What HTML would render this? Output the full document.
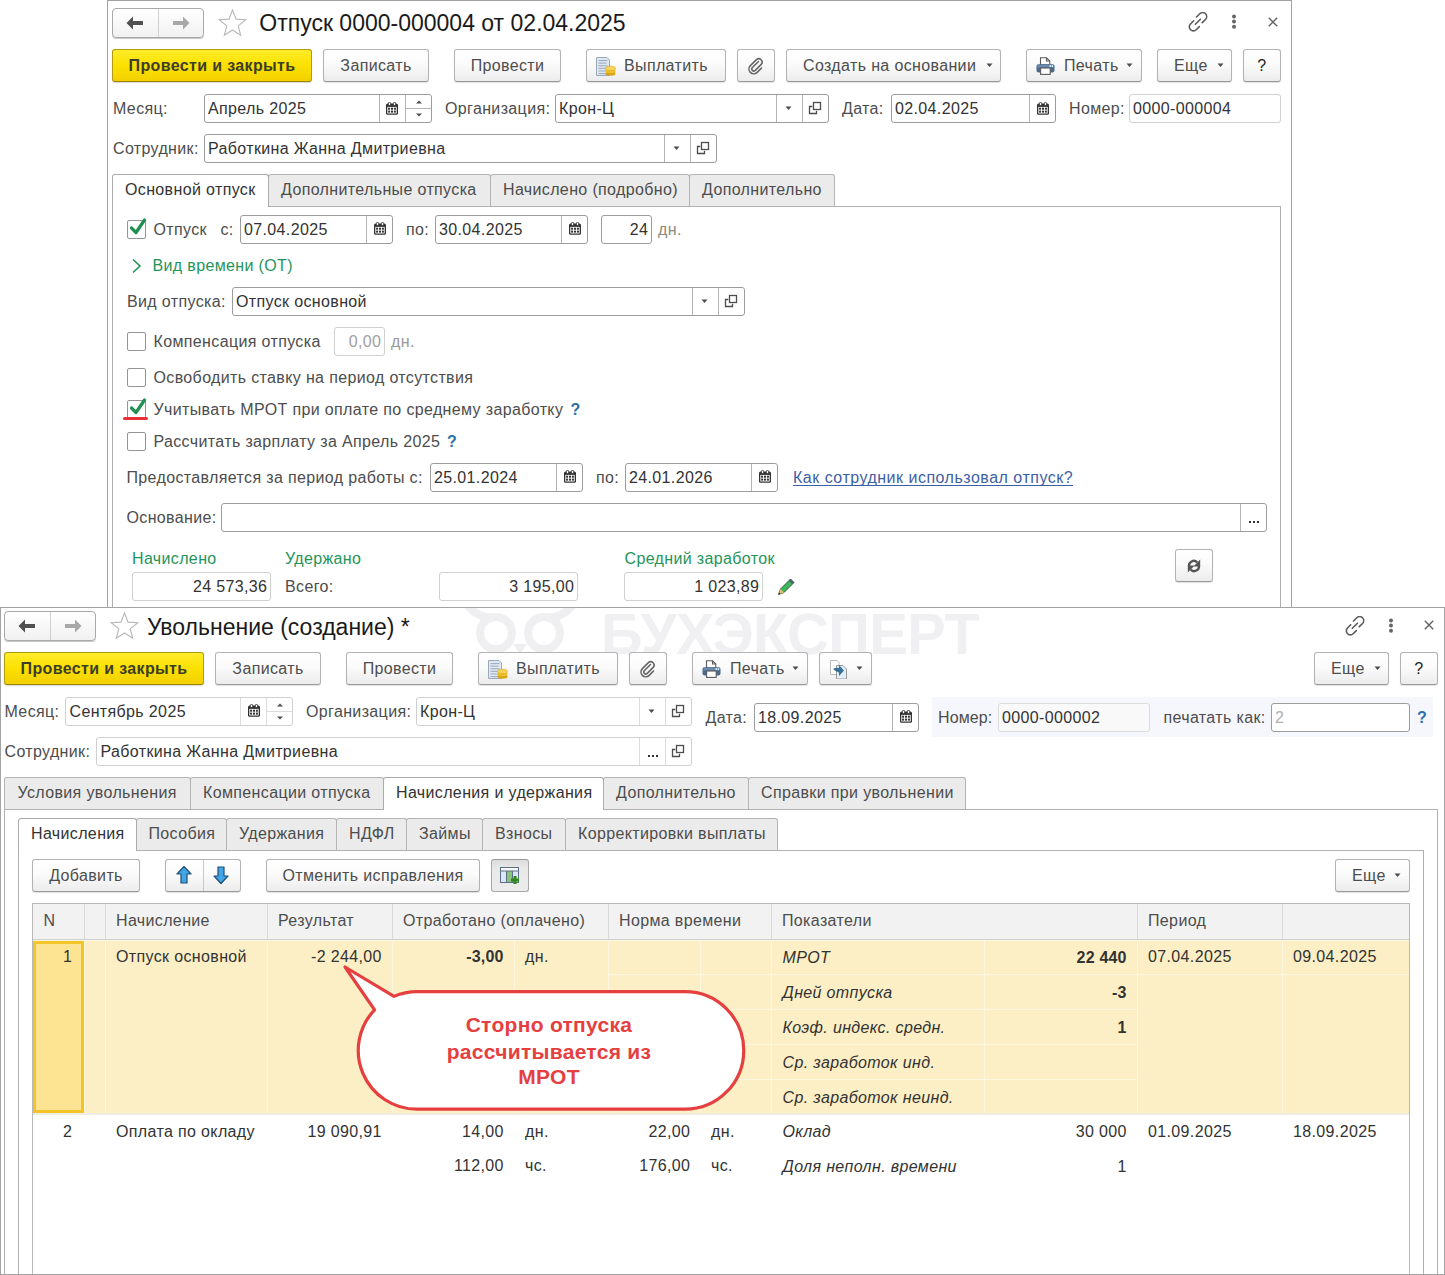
<!DOCTYPE html>
<html><head><meta charset="utf-8"><style>
html,body{margin:0;padding:0;}
body{width:1445px;height:1275px;overflow:hidden;position:relative;background:#fff;font-family:"Liberation Sans", sans-serif;}
.t{position:absolute;white-space:nowrap;font-family:"Liberation Sans", sans-serif;}
.r{position:absolute;}
</style></head><body>
<div class="r" style="left:107px;top:0;width:1185px;height:608px;border:1px solid #a3a3a3;box-sizing:border-box;background:#fff"></div>
<div class="r" style="left:112px;top:8px;width:92px;height:30px;border:1px solid #a9a9a9;border-radius:4px;background:linear-gradient(#fff,#f1f1f1);box-sizing:border-box;box-shadow:0 1px 0 #c8c8c8;"></div>
<div class="r" style="left:158px;top:9px;width:1px;height:28px;background:#d0d0d0;"></div>
<svg class="r" style="left:126px;top:16px" width="18" height="14" viewBox="0 0 18 14"><path d="M0.5 7 L7 0.5 V5 H17 V9 H7 V13.5 Z" fill="#505050"/></svg>
<svg class="r" style="left:172px;top:16px" width="18" height="14" viewBox="0 0 18 14"><path d="M17.5 7 L11 0.5 V5 H1 V9 H11 V13.5 Z" fill="#a8a8a8"/></svg>
<svg class="r" style="left:218px;top:9px" width="29" height="28" viewBox="0 0 29 28"><polygon points="14.50,1.00 18.03,10.15 27.81,10.67 20.21,16.85 22.73,26.33 14.50,21.00 6.27,26.33 8.79,16.85 1.19,10.67 10.97,10.15" fill="#fff" stroke="#b8b8b8" stroke-width="1.1"/></svg>
<div class="t" style="top:8.50px;font-size:23px;line-height:29px;color:#1a1a1a;letter-spacing:0px;left:259.30px;">Отпуск 0000-000004 от 02.04.2025</div>
<svg class="r" style="left:1188px;top:12px" width="20" height="20" viewBox="0 0 20 20"><g fill="none" stroke="#5a5a5a" stroke-width="1.6" stroke-linecap="round"><path d="M8.5 5 L11.8 1.8 a4 4 0 0 1 5.7 5.7 L14.3 10.6"/><path d="M11.3 14.6 L8.2 17.7 a4 4 0 0 1 -5.7 -5.7 L5.7 8.8"/><path d="M7.3 12.3 L12.4 7.2"/></g></svg>
<svg class="r" style="left:1231px;top:14px" width="6" height="16" viewBox="0 0 6 16"><circle cx="3" cy="2.5" r="2" fill="#666"/><circle cx="3" cy="7.6" r="2" fill="#666"/><circle cx="3" cy="12.7" r="2" fill="#666"/></svg>
<svg class="r" style="left:1267.5px;top:17px" width="10" height="10" viewBox="0 0 10 10"><path d="M0.8 0.8 L9.2 9.2 M9.2 0.8 L0.8 9.2" stroke="#666" stroke-width="1.5"/></svg>
<div class="r" style="left:112px;top:49px;width:200px;height:33px;border:1px solid #b39b10;border-bottom-color:#9c8400;border-radius:3px;background:linear-gradient(#ffec2a 0%,#fbe000 50%,#f3d000 100%);box-sizing:border-box;box-shadow:0 1px 1px rgba(0,0,0,.15);"></div>
<div class="t" style="top:56.00px;font-size:16px;line-height:20px;color:#3d3d2a;letter-spacing:0.36px;font-weight:700;left:-88.00px;width:600px;text-align:center;">Провести и закрыть</div>
<div class="r" style="left:323px;top:49px;width:106px;height:33px;border:1px solid #b3b3b3;border-bottom-color:#999;border-radius:3px;background:linear-gradient(#ffffff 0%,#fbfbfb 45%,#ececec 100%);box-sizing:border-box;box-shadow:0 1px 1px rgba(0,0,0,.12);"></div>
<div class="t" style="top:56.00px;font-size:16px;line-height:20px;color:#4d4d4d;letter-spacing:0.36px;left:76.00px;width:600px;text-align:center;">Записать</div>
<div class="r" style="left:454px;top:49px;width:107px;height:33px;border:1px solid #b3b3b3;border-bottom-color:#999;border-radius:3px;background:linear-gradient(#ffffff 0%,#fbfbfb 45%,#ececec 100%);box-sizing:border-box;box-shadow:0 1px 1px rgba(0,0,0,.12);"></div>
<div class="t" style="top:56.00px;font-size:16px;line-height:20px;color:#4d4d4d;letter-spacing:0.36px;left:207.50px;width:600px;text-align:center;">Провести</div>
<div class="r" style="left:586px;top:49px;width:140px;height:33px;border:1px solid #b3b3b3;border-bottom-color:#999;border-radius:3px;background:linear-gradient(#ffffff 0%,#fbfbfb 45%,#ececec 100%);box-sizing:border-box;box-shadow:0 1px 1px rgba(0,0,0,.12);"></div>
<div class="t" style="top:56.00px;font-size:16px;line-height:20px;color:#4d4d4d;letter-spacing:0.36px;left:624.00px;">Выплатить</div>
<svg class="r" style="left:596px;top:57px" width="20" height="20" viewBox="0 0 20 20"><path d="M0.5 0.5 H11 L13.5 3 V18.5 H0.5 Z" fill="#dfe7f0" stroke="#9aa8b8" stroke-width="1"/><rect x="2.5" y="3.0" width="9" height="1.1" fill="#9fb0c4"/><rect x="2.5" y="5.6" width="8" height="1.1" fill="#9fb0c4"/><rect x="2.5" y="8.2" width="9" height="1.1" fill="#9fb0c4"/><rect x="2.5" y="10.8" width="8" height="1.1" fill="#9fb0c4"/><rect x="2.5" y="13.4" width="9" height="1.1" fill="#9fb0c4"/><rect x="2.5" y="16.0" width="8" height="1.1" fill="#9fb0c4"/><ellipse cx="14.5" cy="16.5" rx="5" ry="2.2" fill="#d9a416"/><ellipse cx="14.5" cy="14" rx="5" ry="2.2" fill="#f0c030"/><ellipse cx="14.5" cy="11.5" rx="5" ry="2.2" fill="#f7d45a" stroke="#d9a416" stroke-width="0.6"/></svg>
<div class="r" style="left:737px;top:49px;width:38px;height:33px;border:1px solid #b3b3b3;border-bottom-color:#999;border-radius:3px;background:linear-gradient(#ffffff 0%,#fbfbfb 45%,#ececec 100%);box-sizing:border-box;box-shadow:0 1px 1px rgba(0,0,0,.12);"></div>
<svg class="r" style="left:747px;top:56.5px" width="18" height="18" viewBox="0 0 18 18"><path d="M11.5 4.5 L5.2 10.8 a2 2 0 0 0 2.8 2.8 L14.2 7.4 a3.4 3.4 0 0 0 -4.8 -4.8 L3.4 8.6 a4.8 4.8 0 0 0 6.8 6.8 L14.5 11" fill="none" stroke="#666" stroke-width="1.6" stroke-linecap="round"/></svg>
<div class="r" style="left:786px;top:49px;width:215px;height:33px;border:1px solid #b3b3b3;border-bottom-color:#999;border-radius:3px;background:linear-gradient(#ffffff 0%,#fbfbfb 45%,#ececec 100%);box-sizing:border-box;box-shadow:0 1px 1px rgba(0,0,0,.12);"></div>
<div class="t" style="top:56.00px;font-size:16px;line-height:20px;color:#4d4d4d;letter-spacing:0.36px;left:803.00px;">Создать на основании</div>
<svg class="r" style="left:985.5px;top:63px" width="8" height="5" viewBox="0 0 8 5"><path d="M0.5 0.5 H6.5 L3.5 4 Z" fill="#4d4d4d"/></svg>
<div class="r" style="left:1026px;top:49px;width:116px;height:33px;border:1px solid #b3b3b3;border-bottom-color:#999;border-radius:3px;background:linear-gradient(#ffffff 0%,#fbfbfb 45%,#ececec 100%);box-sizing:border-box;box-shadow:0 1px 1px rgba(0,0,0,.12);"></div>
<div class="t" style="top:56.00px;font-size:16px;line-height:20px;color:#4d4d4d;letter-spacing:0.36px;left:1064.00px;">Печать</div>
<svg class="r" style="left:1125.5px;top:63px" width="8" height="5" viewBox="0 0 8 5"><path d="M0.5 0.5 H6.5 L3.5 4 Z" fill="#4d4d4d"/></svg>
<svg class="r" style="left:1036px;top:57px" width="19" height="18" viewBox="0 0 19 18"><path d="M4.5 0.8 H10.5 L13.8 4 V8 H4.5 Z" fill="#fff" stroke="#5a5a5a" stroke-width="1.1"/><path d="M10.5 0.8 V4 H13.8" fill="none" stroke="#5a5a5a" stroke-width="1.1"/><rect x="0.5" y="7.2" width="18" height="8.2" rx="1.8" fill="#4a6a90"/><rect x="1.5" y="8" width="16" height="2.5" fill="#6a8ab0"/><rect x="13.5" y="8.3" width="1.5" height="1.5" fill="#dff"/><rect x="15.6" y="8.3" width="1.5" height="1.5" fill="#dff"/><rect x="4.6" y="11" width="9.6" height="6.4" fill="#fff" stroke="#5a5a5a" stroke-width="1.1"/></svg>
<div class="r" style="left:1157px;top:49px;width:75px;height:33px;border:1px solid #b3b3b3;border-bottom-color:#999;border-radius:3px;background:linear-gradient(#ffffff 0%,#fbfbfb 45%,#ececec 100%);box-sizing:border-box;box-shadow:0 1px 1px rgba(0,0,0,.12);"></div>
<div class="t" style="top:56.00px;font-size:16px;line-height:20px;color:#4d4d4d;letter-spacing:0.36px;left:1174.00px;">Еще</div>
<svg class="r" style="left:1216.5px;top:63px" width="8" height="5" viewBox="0 0 8 5"><path d="M0.5 0.5 H6.5 L3.5 4 Z" fill="#4d4d4d"/></svg>
<div class="r" style="left:1243px;top:49px;width:38px;height:33px;border:1px solid #b3b3b3;border-bottom-color:#999;border-radius:3px;background:linear-gradient(#ffffff 0%,#fbfbfb 45%,#ececec 100%);box-sizing:border-box;box-shadow:0 1px 1px rgba(0,0,0,.12);"></div>
<div class="t" style="top:56.00px;font-size:16px;line-height:20px;color:#222;letter-spacing:0.36px;left:962.00px;width:600px;text-align:center;">?</div>
<div class="t" style="top:99.00px;font-size:16px;line-height:20px;color:#4d4d4d;letter-spacing:0.36px;left:113.00px;">Месяц:</div>
<div class="r" style="left:204px;top:94px;width:228px;height:29px;border:1px solid #9c9c9c;border-radius:3px;background:#fff;box-sizing:border-box;"></div>
<div class="t" style="top:98.50px;font-size:16px;line-height:20px;color:#333;letter-spacing:0.36px;left:208.00px;">Апрель 2025</div>
<div class="r" style="left:379px;top:95px;width:1px;height:27px;background:#b4b4b4;"></div>
<svg class="r" style="left:386px;top:102px" width="12" height="13" viewBox="0 0 12 13"><rect x="0" y="1.6" width="12" height="11.2" rx="1.6" fill="#333"/><rect x="1.3" y="4.9" width="9.4" height="6.6" fill="#fff"/><rect x="2.4" y="0.3" width="2.2" height="3.3" rx="1.1" fill="#fff" stroke="#333" stroke-width="0.9"/><rect x="7.4" y="0.3" width="2.2" height="3.3" rx="1.1" fill="#fff" stroke="#333" stroke-width="0.9"/><rect x="2.1" y="5.7" width="2" height="2" fill="#333"/><rect x="2.1" y="8.6" width="2" height="2" fill="#333"/><rect x="5.0" y="5.7" width="2" height="2" fill="#333"/><rect x="5.0" y="8.6" width="2" height="2" fill="#333"/><rect x="7.9" y="5.7" width="2" height="2" fill="#333"/><rect x="7.9" y="8.6" width="2" height="2" fill="#333"/></svg>
<div class="r" style="left:405px;top:95px;width:1px;height:27px;background:#b4b4b4;"></div>
<div class="r" style="left:406px;top:108px;width:25px;height:1px;background:#b4b4b4;"></div>
<svg class="r" style="left:416.0px;top:100px" width="6" height="4" viewBox="0 0 6 4"><path d="M0 3.5 H6 L3 0.5Z" fill="#4d4d4d"/></svg>
<svg class="r" style="left:416.0px;top:113px" width="6" height="4" viewBox="0 0 6 4"><path d="M0 0.5 H6 L3 3.5Z" fill="#4d4d4d"/></svg>
<div class="t" style="top:99.00px;font-size:16px;line-height:20px;color:#4d4d4d;letter-spacing:0.36px;left:445.00px;">Организация:</div>
<div class="r" style="left:555px;top:94px;width:274px;height:29px;border:1px solid #9c9c9c;border-radius:3px;background:#fff;box-sizing:border-box;"></div>
<div class="t" style="top:98.50px;font-size:16px;line-height:20px;color:#333;letter-spacing:0.36px;left:559.00px;">Крон-Ц</div>
<div class="r" style="left:776px;top:95px;width:1px;height:27px;background:#b4b4b4;"></div>
<svg class="r" style="left:785.0px;top:105.5px" width="8" height="5" viewBox="0 0 8 5"><path d="M0.5 0.5 H6.5 L3.5 4 Z" fill="#4d4d4d"/></svg>
<div class="r" style="left:802px;top:95px;width:1px;height:27px;background:#b4b4b4;"></div>
<svg class="r" style="left:808.0px;top:100.5px" width="14" height="14" viewBox="0 0 14 14"><path d="M4.3 5.5 H1.5 V12.5 H8.5 V9.8" fill="none" stroke="#4d4d4d" stroke-width="1.3"/><rect x="5.5" y="1.5" width="7" height="7" fill="none" stroke="#4d4d4d" stroke-width="1.3"/></svg>
<div class="t" style="top:99.00px;font-size:16px;line-height:20px;color:#4d4d4d;letter-spacing:0.36px;left:842.00px;">Дата:</div>
<div class="r" style="left:891px;top:94px;width:165px;height:29px;border:1px solid #9c9c9c;border-radius:3px;background:#fff;box-sizing:border-box;"></div>
<div class="t" style="top:98.50px;font-size:16px;line-height:20px;color:#333;letter-spacing:0.36px;left:895.00px;">02.04.2025</div>
<div class="r" style="left:1029px;top:95px;width:1px;height:27px;background:#b4b4b4;"></div>
<svg class="r" style="left:1037px;top:102px" width="12" height="13" viewBox="0 0 12 13"><rect x="0" y="1.6" width="12" height="11.2" rx="1.6" fill="#333"/><rect x="1.3" y="4.9" width="9.4" height="6.6" fill="#fff"/><rect x="2.4" y="0.3" width="2.2" height="3.3" rx="1.1" fill="#fff" stroke="#333" stroke-width="0.9"/><rect x="7.4" y="0.3" width="2.2" height="3.3" rx="1.1" fill="#fff" stroke="#333" stroke-width="0.9"/><rect x="2.1" y="5.7" width="2" height="2" fill="#333"/><rect x="2.1" y="8.6" width="2" height="2" fill="#333"/><rect x="5.0" y="5.7" width="2" height="2" fill="#333"/><rect x="5.0" y="8.6" width="2" height="2" fill="#333"/><rect x="7.9" y="5.7" width="2" height="2" fill="#333"/><rect x="7.9" y="8.6" width="2" height="2" fill="#333"/></svg>
<div class="t" style="top:99.00px;font-size:16px;line-height:20px;color:#4d4d4d;letter-spacing:0.36px;left:1069.00px;">Номер:</div>
<div class="r" style="left:1129px;top:94px;width:152px;height:29px;border:1px solid #d0d0d0;border-radius:3px;background:#fff;box-sizing:border-box;"></div>
<div class="t" style="top:98.50px;font-size:16px;line-height:20px;color:#333;letter-spacing:0.36px;left:1133.00px;">0000-000004</div>
<div class="t" style="top:139.00px;font-size:16px;line-height:20px;color:#4d4d4d;letter-spacing:0.36px;left:113.00px;">Сотрудник:</div>
<div class="r" style="left:204px;top:134px;width:513px;height:29px;border:1px solid #9c9c9c;border-radius:3px;background:#fff;box-sizing:border-box;"></div>
<div class="t" style="top:138.50px;font-size:16px;line-height:20px;color:#333;letter-spacing:0.36px;left:208.00px;">Работкина Жанна Дмитриевна</div>
<div class="r" style="left:664px;top:135px;width:1px;height:27px;background:#b4b4b4;"></div>
<svg class="r" style="left:673.0px;top:145.5px" width="8" height="5" viewBox="0 0 8 5"><path d="M0.5 0.5 H6.5 L3.5 4 Z" fill="#4d4d4d"/></svg>
<div class="r" style="left:690px;top:135px;width:1px;height:27px;background:#b4b4b4;"></div>
<svg class="r" style="left:696.0px;top:140.5px" width="14" height="14" viewBox="0 0 14 14"><path d="M4.3 5.5 H1.5 V12.5 H8.5 V9.8" fill="none" stroke="#4d4d4d" stroke-width="1.3"/><rect x="5.5" y="1.5" width="7" height="7" fill="none" stroke="#4d4d4d" stroke-width="1.3"/></svg>
<div class="r" style="left:112px;top:206px;width:1169px;height:494px;border:1px solid #b0b0b0;box-sizing:border-box;background:#fff;"></div>
<div class="r" style="left:268px;top:174px;width:223px;height:32px;border:1px solid #b4b4b4;border-bottom:none;border-radius:3px 3px 0 0;background:#ebebeb;box-sizing:border-box;"></div>
<div class="t" style="top:179.50px;font-size:16px;line-height:20px;color:#4d4d4d;letter-spacing:0.36px;left:281.00px;z-index:3;">Дополнительные отпуска</div>
<div class="r" style="left:490px;top:174px;width:200px;height:32px;border:1px solid #b4b4b4;border-bottom:none;border-radius:3px 3px 0 0;background:#ebebeb;box-sizing:border-box;"></div>
<div class="t" style="top:179.50px;font-size:16px;line-height:20px;color:#4d4d4d;letter-spacing:0.36px;left:503.00px;z-index:3;">Начислено (подробно)</div>
<div class="r" style="left:689px;top:174px;width:146px;height:32px;border:1px solid #b4b4b4;border-bottom:none;border-radius:3px 3px 0 0;background:#ebebeb;box-sizing:border-box;"></div>
<div class="t" style="top:179.50px;font-size:16px;line-height:20px;color:#4d4d4d;letter-spacing:0.36px;left:702.00px;z-index:3;">Дополнительно</div>
<div class="r" style="left:112px;top:174px;width:157px;height:33px;border:1px solid #ababab;border-bottom:none;border-radius:3px 3px 0 0;background:#fff;box-sizing:border-box;z-index:2;"></div>
<div class="t" style="top:179.50px;font-size:16px;line-height:20px;color:#333;letter-spacing:0.36px;left:125.00px;z-index:3;">Основной отпуск</div>
<div class="r" style="left:127px;top:220px;width:19px;height:19px;border:1px solid #959595;border-radius:2px;background:#fff;box-sizing:border-box;"></div>
<svg class="r" style="left:129px;top:217px" width="18" height="19" viewBox="0 0 18 19"><path d="M2.5 11 L7 15.5 L15.5 3" fill="none" stroke="#1e9150" stroke-width="3.2" stroke-linecap="round" stroke-linejoin="round"/></svg>
<div class="t" style="top:220.00px;font-size:16px;line-height:20px;color:#4d4d4d;letter-spacing:0.36px;left:153.50px;">Отпуск</div>
<div class="t" style="top:220.00px;font-size:16px;line-height:20px;color:#4d4d4d;letter-spacing:0.36px;left:220.50px;">с:</div>
<div class="r" style="left:240px;top:215px;width:153px;height:29px;border:1px solid #9c9c9c;border-radius:3px;background:#fff;box-sizing:border-box;"></div>
<div class="t" style="top:219.50px;font-size:16px;line-height:20px;color:#333;letter-spacing:0.36px;left:244.00px;">07.04.2025</div>
<div class="r" style="left:366px;top:216px;width:1px;height:27px;background:#b4b4b4;"></div>
<svg class="r" style="left:374px;top:222px" width="12" height="13" viewBox="0 0 12 13"><rect x="0" y="1.6" width="12" height="11.2" rx="1.6" fill="#333"/><rect x="1.3" y="4.9" width="9.4" height="6.6" fill="#fff"/><rect x="2.4" y="0.3" width="2.2" height="3.3" rx="1.1" fill="#fff" stroke="#333" stroke-width="0.9"/><rect x="7.4" y="0.3" width="2.2" height="3.3" rx="1.1" fill="#fff" stroke="#333" stroke-width="0.9"/><rect x="2.1" y="5.7" width="2" height="2" fill="#333"/><rect x="2.1" y="8.6" width="2" height="2" fill="#333"/><rect x="5.0" y="5.7" width="2" height="2" fill="#333"/><rect x="5.0" y="8.6" width="2" height="2" fill="#333"/><rect x="7.9" y="5.7" width="2" height="2" fill="#333"/><rect x="7.9" y="8.6" width="2" height="2" fill="#333"/></svg>
<div class="t" style="top:220.00px;font-size:16px;line-height:20px;color:#4d4d4d;letter-spacing:0.36px;left:406.00px;">по:</div>
<div class="r" style="left:435px;top:215px;width:153px;height:29px;border:1px solid #9c9c9c;border-radius:3px;background:#fff;box-sizing:border-box;"></div>
<div class="t" style="top:219.50px;font-size:16px;line-height:20px;color:#333;letter-spacing:0.36px;left:439.00px;">30.04.2025</div>
<div class="r" style="left:561px;top:216px;width:1px;height:27px;background:#b4b4b4;"></div>
<svg class="r" style="left:569px;top:222px" width="12" height="13" viewBox="0 0 12 13"><rect x="0" y="1.6" width="12" height="11.2" rx="1.6" fill="#333"/><rect x="1.3" y="4.9" width="9.4" height="6.6" fill="#fff"/><rect x="2.4" y="0.3" width="2.2" height="3.3" rx="1.1" fill="#fff" stroke="#333" stroke-width="0.9"/><rect x="7.4" y="0.3" width="2.2" height="3.3" rx="1.1" fill="#fff" stroke="#333" stroke-width="0.9"/><rect x="2.1" y="5.7" width="2" height="2" fill="#333"/><rect x="2.1" y="8.6" width="2" height="2" fill="#333"/><rect x="5.0" y="5.7" width="2" height="2" fill="#333"/><rect x="5.0" y="8.6" width="2" height="2" fill="#333"/><rect x="7.9" y="5.7" width="2" height="2" fill="#333"/><rect x="7.9" y="8.6" width="2" height="2" fill="#333"/></svg>
<div class="r" style="left:601px;top:215px;width:51px;height:29px;border:1px solid #9c9c9c;border-radius:3px;background:#fff;box-sizing:border-box;"></div>
<div class="t" style="top:219.50px;font-size:16px;line-height:20px;color:#333;letter-spacing:0.36px;right:796.64px;">24</div>
<div class="t" style="top:220.00px;font-size:16px;line-height:20px;color:#8c8c78;letter-spacing:0.36px;left:658.00px;">дн.</div>
<svg class="r" style="left:131px;top:258px" width="12" height="16" viewBox="0 0 12 16"><path d="M2 1.5 L9 8 L2 14.5" fill="none" stroke="#1f955a" stroke-width="1.6"/></svg>
<div class="t" style="top:256.00px;font-size:16px;line-height:20px;color:#1f955a;letter-spacing:0.36px;left:152.50px;">Вид времени (ОТ)</div>
<div class="t" style="top:292.00px;font-size:16px;line-height:20px;color:#4d4d4d;letter-spacing:0.36px;left:127.00px;">Вид отпуска:</div>
<div class="r" style="left:232px;top:287px;width:513px;height:29px;border:1px solid #9c9c9c;border-radius:3px;background:#fff;box-sizing:border-box;"></div>
<div class="t" style="top:291.50px;font-size:16px;line-height:20px;color:#333;letter-spacing:0.36px;left:236.00px;">Отпуск основной</div>
<div class="r" style="left:692px;top:288px;width:1px;height:27px;background:#b4b4b4;"></div>
<svg class="r" style="left:701.0px;top:298.5px" width="8" height="5" viewBox="0 0 8 5"><path d="M0.5 0.5 H6.5 L3.5 4 Z" fill="#4d4d4d"/></svg>
<div class="r" style="left:718px;top:288px;width:1px;height:27px;background:#b4b4b4;"></div>
<svg class="r" style="left:724.0px;top:293.5px" width="14" height="14" viewBox="0 0 14 14"><path d="M4.3 5.5 H1.5 V12.5 H8.5 V9.8" fill="none" stroke="#4d4d4d" stroke-width="1.3"/><rect x="5.5" y="1.5" width="7" height="7" fill="none" stroke="#4d4d4d" stroke-width="1.3"/></svg>
<div class="r" style="left:127px;top:332px;width:19px;height:19px;border:1px solid #959595;border-radius:2px;background:#fff;box-sizing:border-box;"></div>
<div class="t" style="top:332.00px;font-size:16px;line-height:20px;color:#4d4d4d;letter-spacing:0.36px;left:153.50px;">Компенсация отпуска</div>
<div class="r" style="left:334px;top:327px;width:51px;height:29px;border:1px solid #d0d0d0;border-radius:3px;background:#fff;box-sizing:border-box;"></div>
<div class="t" style="top:331.50px;font-size:16px;line-height:20px;color:#a0a0a0;letter-spacing:0.36px;right:1063.64px;">0,00</div>
<div class="t" style="top:332.00px;font-size:16px;line-height:20px;color:#999;letter-spacing:0.36px;left:391.00px;">дн.</div>
<div class="r" style="left:127px;top:368px;width:19px;height:19px;border:1px solid #959595;border-radius:2px;background:#fff;box-sizing:border-box;"></div>
<div class="t" style="top:368.00px;font-size:16px;line-height:20px;color:#4d4d4d;letter-spacing:0.36px;left:153.50px;">Освободить ставку на период отсутствия</div>
<div class="r" style="left:127px;top:400px;width:19px;height:19px;border:1px solid #959595;border-radius:2px;background:#fff;box-sizing:border-box;"></div>
<svg class="r" style="left:129px;top:397px" width="18" height="19" viewBox="0 0 18 19"><path d="M2.5 11 L7 15.5 L15.5 3" fill="none" stroke="#1e9150" stroke-width="3.2" stroke-linecap="round" stroke-linejoin="round"/></svg>
<div class="r" style="left:123px;top:416.5px;width:25px;height:3.0px;background:#e8303a;border-radius:1.5px;"></div>
<div class="t" style="top:400.00px;font-size:16px;line-height:20px;color:#4d4d4d;letter-spacing:0.36px;left:153.50px;">Учитывать МРОТ при оплате по среднему заработку</div>
<div class="t" style="top:400.00px;font-size:16px;line-height:20px;color:#2b70aa;letter-spacing:0px;font-weight:700;left:570.50px;">?</div>
<div class="r" style="left:127px;top:432px;width:19px;height:19px;border:1px solid #959595;border-radius:2px;background:#fff;box-sizing:border-box;"></div>
<div class="t" style="top:432.00px;font-size:16px;line-height:20px;color:#4d4d4d;letter-spacing:0.36px;left:153.50px;">Рассчитать зарплату за Апрель 2025</div>
<div class="t" style="top:432.00px;font-size:16px;line-height:20px;color:#2b70aa;letter-spacing:0px;font-weight:700;left:447.00px;">?</div>
<div class="t" style="top:468.00px;font-size:16px;line-height:20px;color:#4d4d4d;letter-spacing:0.36px;left:126.50px;">Предоставляется за период работы с:</div>
<div class="r" style="left:430px;top:463px;width:153px;height:29px;border:1px solid #9c9c9c;border-radius:3px;background:#fff;box-sizing:border-box;"></div>
<div class="t" style="top:467.50px;font-size:16px;line-height:20px;color:#333;letter-spacing:0.36px;left:434.00px;">25.01.2024</div>
<div class="r" style="left:556px;top:464px;width:1px;height:27px;background:#b4b4b4;"></div>
<svg class="r" style="left:564px;top:470px" width="12" height="13" viewBox="0 0 12 13"><rect x="0" y="1.6" width="12" height="11.2" rx="1.6" fill="#333"/><rect x="1.3" y="4.9" width="9.4" height="6.6" fill="#fff"/><rect x="2.4" y="0.3" width="2.2" height="3.3" rx="1.1" fill="#fff" stroke="#333" stroke-width="0.9"/><rect x="7.4" y="0.3" width="2.2" height="3.3" rx="1.1" fill="#fff" stroke="#333" stroke-width="0.9"/><rect x="2.1" y="5.7" width="2" height="2" fill="#333"/><rect x="2.1" y="8.6" width="2" height="2" fill="#333"/><rect x="5.0" y="5.7" width="2" height="2" fill="#333"/><rect x="5.0" y="8.6" width="2" height="2" fill="#333"/><rect x="7.9" y="5.7" width="2" height="2" fill="#333"/><rect x="7.9" y="8.6" width="2" height="2" fill="#333"/></svg>
<div class="t" style="top:468.00px;font-size:16px;line-height:20px;color:#4d4d4d;letter-spacing:0.36px;left:596.00px;">по:</div>
<div class="r" style="left:625px;top:463px;width:153px;height:29px;border:1px solid #9c9c9c;border-radius:3px;background:#fff;box-sizing:border-box;"></div>
<div class="t" style="top:467.50px;font-size:16px;line-height:20px;color:#333;letter-spacing:0.36px;left:629.00px;">24.01.2026</div>
<div class="r" style="left:751px;top:464px;width:1px;height:27px;background:#b4b4b4;"></div>
<svg class="r" style="left:759px;top:470px" width="12" height="13" viewBox="0 0 12 13"><rect x="0" y="1.6" width="12" height="11.2" rx="1.6" fill="#333"/><rect x="1.3" y="4.9" width="9.4" height="6.6" fill="#fff"/><rect x="2.4" y="0.3" width="2.2" height="3.3" rx="1.1" fill="#fff" stroke="#333" stroke-width="0.9"/><rect x="7.4" y="0.3" width="2.2" height="3.3" rx="1.1" fill="#fff" stroke="#333" stroke-width="0.9"/><rect x="2.1" y="5.7" width="2" height="2" fill="#333"/><rect x="2.1" y="8.6" width="2" height="2" fill="#333"/><rect x="5.0" y="5.7" width="2" height="2" fill="#333"/><rect x="5.0" y="8.6" width="2" height="2" fill="#333"/><rect x="7.9" y="5.7" width="2" height="2" fill="#333"/><rect x="7.9" y="8.6" width="2" height="2" fill="#333"/></svg>
<div class="t" style="top:468.00px;font-size:16px;line-height:20px;color:#3d5fa6;letter-spacing:0.5px;left:793.00px;text-decoration:underline;text-decoration-skip-ink:none;text-underline-offset:2px;">Как сотрудник использовал отпуск?</div>
<div class="t" style="top:508.00px;font-size:16px;line-height:20px;color:#4d4d4d;letter-spacing:0.36px;left:126.50px;">Основание:</div>
<div class="r" style="left:221px;top:503px;width:1046px;height:29px;border:1px solid #9c9c9c;border-radius:3px;background:#fff;box-sizing:border-box;"></div>
<div class="r" style="left:1240px;top:504px;width:1px;height:27px;background:#b4b4b4;"></div>
<svg class="r" style="left:1248.0px;top:519.5px" width="12" height="4" viewBox="0 0 12 4"><rect x="1" y="1" width="2" height="2" fill="#333"/><rect x="5" y="1" width="2" height="2" fill="#333"/><rect x="9" y="1" width="2" height="2" fill="#333"/></svg>
<div class="t" style="top:548.50px;font-size:16px;line-height:20px;color:#1f955a;letter-spacing:0.36px;left:132.00px;">Начислено</div>
<div class="t" style="top:548.50px;font-size:16px;line-height:20px;color:#1f955a;letter-spacing:0.36px;left:285.00px;">Удержано</div>
<div class="t" style="top:548.50px;font-size:16px;line-height:20px;color:#1f955a;letter-spacing:0.36px;left:624.50px;">Средний заработок</div>
<div class="r" style="left:132px;top:572px;width:139px;height:29px;border:1px solid #d0d0d0;border-radius:3px;background:#fff;box-sizing:border-box;"></div>
<div class="t" style="top:576.50px;font-size:16px;line-height:20px;color:#333;letter-spacing:0.36px;right:1177.64px;">24 573,36</div>
<div class="t" style="top:576.50px;font-size:16px;line-height:20px;color:#4d4d4d;letter-spacing:0.36px;left:285.00px;">Всего:</div>
<div class="r" style="left:439px;top:572px;width:139px;height:29px;border:1px solid #d0d0d0;border-radius:3px;background:#fff;box-sizing:border-box;"></div>
<div class="t" style="top:576.50px;font-size:16px;line-height:20px;color:#333;letter-spacing:0.36px;right:870.64px;">3 195,00</div>
<div class="r" style="left:624px;top:572px;width:139px;height:29px;border:1px solid #d0d0d0;border-radius:3px;background:#fff;box-sizing:border-box;"></div>
<div class="t" style="top:576.50px;font-size:16px;line-height:20px;color:#333;letter-spacing:0.36px;right:685.64px;">1 023,89</div>
<svg class="r" style="left:777px;top:577px" width="19" height="19" viewBox="0 0 19 19"><path d="M1.5 17.5 L3.5 12 L13.5 2 L17 5.5 L7 15.5 Z" fill="#3cb85a" stroke="#2d4a3a" stroke-width="0.9"/><path d="M13.5 2 L17 5.5 L15.3 7.2 L11.8 3.7Z" fill="#4d6470"/><path d="M1.5 17.5 L3.5 12 L7 15.5Z" fill="#e9c070"/><path d="M1.5 17.5 L2.3 15.3 L3.7 16.7Z" fill="#333"/></svg>
<div class="r" style="left:1175px;top:549px;width:38px;height:33px;border:1px solid #b3b3b3;border-bottom-color:#999;border-radius:3px;background:linear-gradient(#ffffff 0%,#fbfbfb 45%,#ececec 100%);box-sizing:border-box;box-shadow:0 1px 1px rgba(0,0,0,.12);"></div>
<svg class="r" style="left:1187px;top:559px" width="14" height="14" viewBox="0 0 14 14"><g fill="none" stroke="#555" stroke-width="2.4"><path d="M2.2 7.6 A4.6 4.6 0 0 1 10.2 3.6"/><path d="M11.8 6.4 A4.6 4.6 0 0 1 3.8 10.4"/></g><path d="M13.2 0.6 V7.4 H6.4Z" fill="#555"/><path d="M0.8 13.4 V6.6 H7.6Z" fill="#555"/></svg>
<div class="r" style="left:0;top:607px;width:1445px;height:668px;border:1px solid #a3a3a3;box-sizing:border-box;background:#fff"></div>
<div class="t" style="left:601px;top:598px;font-size:58px;line-height:72px;font-weight:700;color:#f0f0f2;letter-spacing:-0.7px;">БУХЭКСПЕРТ</div>
<svg class="r" style="left:455px;top:608px" width="130" height="50" viewBox="0 0 130 50"><g fill="none" stroke="#efeff2" stroke-width="8"><circle cx="41" cy="25" r="16"/><circle cx="89" cy="25" r="16"/><path d="M10 -6 Q22 12 41 9 M120 -6 Q108 12 89 9"/></g><path d="M58 36 L65 46 L72 36Z" fill="#efeff2"/></svg>
<div class="r" style="left:4px;top:611px;width:92px;height:30px;border:1px solid #a9a9a9;border-radius:4px;background:linear-gradient(#fff,#f1f1f1);box-sizing:border-box;box-shadow:0 1px 0 #c8c8c8;"></div>
<div class="r" style="left:50px;top:612px;width:1px;height:28px;background:#d0d0d0;"></div>
<svg class="r" style="left:18px;top:619px" width="18" height="14" viewBox="0 0 18 14"><path d="M0.5 7 L7 0.5 V5 H17 V9 H7 V13.5 Z" fill="#505050"/></svg>
<svg class="r" style="left:64px;top:619px" width="18" height="14" viewBox="0 0 18 14"><path d="M17.5 7 L11 0.5 V5 H1 V9 H11 V13.5 Z" fill="#a8a8a8"/></svg>
<svg class="r" style="left:110px;top:612px" width="29" height="28" viewBox="0 0 29 28"><polygon points="14.50,1.00 18.03,10.15 27.81,10.67 20.21,16.85 22.73,26.33 14.50,21.00 6.27,26.33 8.79,16.85 1.19,10.67 10.97,10.15" fill="#fff" stroke="#b8b8b8" stroke-width="1.1"/></svg>
<div class="t" style="top:613.00px;font-size:23px;line-height:29px;color:#1a1a1a;letter-spacing:0px;left:147.00px;">Увольнение (создание) *</div>
<svg class="r" style="left:1345px;top:616px" width="20" height="20" viewBox="0 0 20 20"><g fill="none" stroke="#5a5a5a" stroke-width="1.6" stroke-linecap="round"><path d="M8.5 5 L11.8 1.8 a4 4 0 0 1 5.7 5.7 L14.3 10.6"/><path d="M11.3 14.6 L8.2 17.7 a4 4 0 0 1 -5.7 -5.7 L5.7 8.8"/><path d="M7.3 12.3 L12.4 7.2"/></g></svg>
<svg class="r" style="left:1387.5px;top:618px" width="6" height="16" viewBox="0 0 6 16"><circle cx="3" cy="2.5" r="2" fill="#666"/><circle cx="3" cy="7.6" r="2" fill="#666"/><circle cx="3" cy="12.7" r="2" fill="#666"/></svg>
<svg class="r" style="left:1424px;top:620px" width="10" height="10" viewBox="0 0 10 10"><path d="M0.8 0.8 L9.2 9.2 M9.2 0.8 L0.8 9.2" stroke="#666" stroke-width="1.5"/></svg>
<div class="r" style="left:4px;top:652px;width:200px;height:33px;border:1px solid #b39b10;border-bottom-color:#9c8400;border-radius:3px;background:linear-gradient(#ffec2a 0%,#fbe000 50%,#f3d000 100%);box-sizing:border-box;box-shadow:0 1px 1px rgba(0,0,0,.15);"></div>
<div class="t" style="top:659.00px;font-size:16px;line-height:20px;color:#3d3d2a;letter-spacing:0.36px;font-weight:700;left:-196.00px;width:600px;text-align:center;">Провести и закрыть</div>
<div class="r" style="left:215px;top:652px;width:106px;height:33px;border:1px solid #b3b3b3;border-bottom-color:#999;border-radius:3px;background:linear-gradient(#ffffff 0%,#fbfbfb 45%,#ececec 100%);box-sizing:border-box;box-shadow:0 1px 1px rgba(0,0,0,.12);"></div>
<div class="t" style="top:659.00px;font-size:16px;line-height:20px;color:#4d4d4d;letter-spacing:0.36px;left:-32.00px;width:600px;text-align:center;">Записать</div>
<div class="r" style="left:346px;top:652px;width:107px;height:33px;border:1px solid #b3b3b3;border-bottom-color:#999;border-radius:3px;background:linear-gradient(#ffffff 0%,#fbfbfb 45%,#ececec 100%);box-sizing:border-box;box-shadow:0 1px 1px rgba(0,0,0,.12);"></div>
<div class="t" style="top:659.00px;font-size:16px;line-height:20px;color:#4d4d4d;letter-spacing:0.36px;left:99.50px;width:600px;text-align:center;">Провести</div>
<div class="r" style="left:478px;top:652px;width:140px;height:33px;border:1px solid #b3b3b3;border-bottom-color:#999;border-radius:3px;background:linear-gradient(#ffffff 0%,#fbfbfb 45%,#ececec 100%);box-sizing:border-box;box-shadow:0 1px 1px rgba(0,0,0,.12);"></div>
<div class="t" style="top:659.00px;font-size:16px;line-height:20px;color:#4d4d4d;letter-spacing:0.36px;left:516.00px;">Выплатить</div>
<svg class="r" style="left:488px;top:660px" width="20" height="20" viewBox="0 0 20 20"><path d="M0.5 0.5 H11 L13.5 3 V18.5 H0.5 Z" fill="#dfe7f0" stroke="#9aa8b8" stroke-width="1"/><rect x="2.5" y="3.0" width="9" height="1.1" fill="#9fb0c4"/><rect x="2.5" y="5.6" width="8" height="1.1" fill="#9fb0c4"/><rect x="2.5" y="8.2" width="9" height="1.1" fill="#9fb0c4"/><rect x="2.5" y="10.8" width="8" height="1.1" fill="#9fb0c4"/><rect x="2.5" y="13.4" width="9" height="1.1" fill="#9fb0c4"/><rect x="2.5" y="16.0" width="8" height="1.1" fill="#9fb0c4"/><ellipse cx="14.5" cy="16.5" rx="5" ry="2.2" fill="#d9a416"/><ellipse cx="14.5" cy="14" rx="5" ry="2.2" fill="#f0c030"/><ellipse cx="14.5" cy="11.5" rx="5" ry="2.2" fill="#f7d45a" stroke="#d9a416" stroke-width="0.6"/></svg>
<div class="r" style="left:629px;top:652px;width:38px;height:33px;border:1px solid #b3b3b3;border-bottom-color:#999;border-radius:3px;background:linear-gradient(#ffffff 0%,#fbfbfb 45%,#ececec 100%);box-sizing:border-box;box-shadow:0 1px 1px rgba(0,0,0,.12);"></div>
<svg class="r" style="left:639px;top:659.5px" width="18" height="18" viewBox="0 0 18 18"><path d="M11.5 4.5 L5.2 10.8 a2 2 0 0 0 2.8 2.8 L14.2 7.4 a3.4 3.4 0 0 0 -4.8 -4.8 L3.4 8.6 a4.8 4.8 0 0 0 6.8 6.8 L14.5 11" fill="none" stroke="#666" stroke-width="1.6" stroke-linecap="round"/></svg>
<div class="r" style="left:692px;top:652px;width:116px;height:33px;border:1px solid #b3b3b3;border-bottom-color:#999;border-radius:3px;background:linear-gradient(#ffffff 0%,#fbfbfb 45%,#ececec 100%);box-sizing:border-box;box-shadow:0 1px 1px rgba(0,0,0,.12);"></div>
<div class="t" style="top:659.00px;font-size:16px;line-height:20px;color:#4d4d4d;letter-spacing:0.36px;left:730.00px;">Печать</div>
<svg class="r" style="left:791.5px;top:666px" width="8" height="5" viewBox="0 0 8 5"><path d="M0.5 0.5 H6.5 L3.5 4 Z" fill="#4d4d4d"/></svg>
<svg class="r" style="left:702px;top:660px" width="19" height="18" viewBox="0 0 19 18"><path d="M4.5 0.8 H10.5 L13.8 4 V8 H4.5 Z" fill="#fff" stroke="#5a5a5a" stroke-width="1.1"/><path d="M10.5 0.8 V4 H13.8" fill="none" stroke="#5a5a5a" stroke-width="1.1"/><rect x="0.5" y="7.2" width="18" height="8.2" rx="1.8" fill="#4a6a90"/><rect x="1.5" y="8" width="16" height="2.5" fill="#6a8ab0"/><rect x="13.5" y="8.3" width="1.5" height="1.5" fill="#dff"/><rect x="15.6" y="8.3" width="1.5" height="1.5" fill="#dff"/><rect x="4.6" y="11" width="9.6" height="6.4" fill="#fff" stroke="#5a5a5a" stroke-width="1.1"/></svg>
<div class="r" style="left:819px;top:652px;width:53px;height:33px;border:1px solid #b3b3b3;border-bottom-color:#999;border-radius:3px;background:linear-gradient(#ffffff 0%,#fbfbfb 45%,#ececec 100%);box-sizing:border-box;box-shadow:0 1px 1px rgba(0,0,0,.12);"></div>
<svg class="r" style="left:855.5px;top:666px" width="8" height="5" viewBox="0 0 8 5"><path d="M0.5 0.5 H6.5 L3.5 4 Z" fill="#4d4d4d"/></svg>
<svg class="r" style="left:829px;top:659px" width="20" height="20" viewBox="0 0 20 20"><path d="M1.5 1.5 H8 L10 3.5 V15.5 H1.5Z" fill="#fff" stroke="#bbb"/><path d="M7.5 6.5 H14 L17.5 10 V20 H7.5Z" fill="#dff0fa" stroke="#999"/><path d="M4 10 Q7 8 10 9 V6 L15 11.5 L10 17 V13.5 Q7 13 4 10Z" fill="#3a6f96"/></svg>
<div class="r" style="left:1314px;top:652px;width:75px;height:33px;border:1px solid #b3b3b3;border-bottom-color:#999;border-radius:3px;background:linear-gradient(#ffffff 0%,#fbfbfb 45%,#ececec 100%);box-sizing:border-box;box-shadow:0 1px 1px rgba(0,0,0,.12);"></div>
<div class="t" style="top:659.00px;font-size:16px;line-height:20px;color:#4d4d4d;letter-spacing:0.36px;left:1331.00px;">Еще</div>
<svg class="r" style="left:1373.5px;top:666px" width="8" height="5" viewBox="0 0 8 5"><path d="M0.5 0.5 H6.5 L3.5 4 Z" fill="#4d4d4d"/></svg>
<div class="r" style="left:1400px;top:652px;width:38px;height:33px;border:1px solid #b3b3b3;border-bottom-color:#999;border-radius:3px;background:linear-gradient(#ffffff 0%,#fbfbfb 45%,#ececec 100%);box-sizing:border-box;box-shadow:0 1px 1px rgba(0,0,0,.12);"></div>
<div class="t" style="top:659.00px;font-size:16px;line-height:20px;color:#222;letter-spacing:0.36px;left:1119.00px;width:600px;text-align:center;">?</div>
<div class="t" style="top:702.00px;font-size:16px;line-height:20px;color:#4d4d4d;letter-spacing:0.36px;left:4.50px;">Месяц:</div>
<div class="r" style="left:65px;top:697px;width:228px;height:29px;border:1px solid #d0d0d0;border-radius:3px;background:#fff;box-sizing:border-box;"></div>
<div class="t" style="top:701.50px;font-size:16px;line-height:20px;color:#333;letter-spacing:0.36px;left:69.50px;">Сентябрь 2025</div>
<div class="r" style="left:240px;top:698px;width:1px;height:27px;background:#dcdcdc;"></div>
<svg class="r" style="left:248px;top:704px" width="12" height="13" viewBox="0 0 12 13"><rect x="0" y="1.6" width="12" height="11.2" rx="1.6" fill="#333"/><rect x="1.3" y="4.9" width="9.4" height="6.6" fill="#fff"/><rect x="2.4" y="0.3" width="2.2" height="3.3" rx="1.1" fill="#fff" stroke="#333" stroke-width="0.9"/><rect x="7.4" y="0.3" width="2.2" height="3.3" rx="1.1" fill="#fff" stroke="#333" stroke-width="0.9"/><rect x="2.1" y="5.7" width="2" height="2" fill="#333"/><rect x="2.1" y="8.6" width="2" height="2" fill="#333"/><rect x="5.0" y="5.7" width="2" height="2" fill="#333"/><rect x="5.0" y="8.6" width="2" height="2" fill="#333"/><rect x="7.9" y="5.7" width="2" height="2" fill="#333"/><rect x="7.9" y="8.6" width="2" height="2" fill="#333"/></svg>
<div class="r" style="left:266px;top:698px;width:1px;height:27px;background:#dcdcdc;"></div>
<div class="r" style="left:267px;top:711px;width:25px;height:1px;background:#dcdcdc;"></div>
<svg class="r" style="left:277.0px;top:703px" width="6" height="4" viewBox="0 0 6 4"><path d="M0 3.5 H6 L3 0.5Z" fill="#4d4d4d"/></svg>
<svg class="r" style="left:277.0px;top:716px" width="6" height="4" viewBox="0 0 6 4"><path d="M0 0.5 H6 L3 3.5Z" fill="#4d4d4d"/></svg>
<div class="t" style="top:702.00px;font-size:16px;line-height:20px;color:#4d4d4d;letter-spacing:0.36px;left:306.00px;">Организация:</div>
<div class="r" style="left:416px;top:697px;width:276px;height:29px;border:1px solid #d0d0d0;border-radius:3px;background:#fff;box-sizing:border-box;"></div>
<div class="t" style="top:701.50px;font-size:16px;line-height:20px;color:#333;letter-spacing:0.36px;left:420.00px;">Крон-Ц</div>
<div class="r" style="left:639px;top:698px;width:1px;height:27px;background:#dcdcdc;"></div>
<svg class="r" style="left:648.0px;top:708.5px" width="8" height="5" viewBox="0 0 8 5"><path d="M0.5 0.5 H6.5 L3.5 4 Z" fill="#4d4d4d"/></svg>
<div class="r" style="left:665px;top:698px;width:1px;height:27px;background:#dcdcdc;"></div>
<svg class="r" style="left:671.0px;top:703.5px" width="14" height="14" viewBox="0 0 14 14"><path d="M4.3 5.5 H1.5 V12.5 H8.5 V9.8" fill="none" stroke="#4d4d4d" stroke-width="1.3"/><rect x="5.5" y="1.5" width="7" height="7" fill="none" stroke="#4d4d4d" stroke-width="1.3"/></svg>
<div class="r" style="left:932px;top:697px;width:501px;height:40px;background:#f6f7fc;"></div>
<div class="t" style="top:708.00px;font-size:16px;line-height:20px;color:#4d4d4d;letter-spacing:0.36px;left:705.50px;">Дата:</div>
<div class="r" style="left:754px;top:703px;width:165px;height:29px;border:1px solid #9c9c9c;border-radius:3px;background:#fff;box-sizing:border-box;"></div>
<div class="t" style="top:707.50px;font-size:16px;line-height:20px;color:#333;letter-spacing:0.36px;left:758.00px;">18.09.2025</div>
<div class="r" style="left:892px;top:704px;width:1px;height:27px;background:#b4b4b4;"></div>
<svg class="r" style="left:900px;top:710px" width="12" height="13" viewBox="0 0 12 13"><rect x="0" y="1.6" width="12" height="11.2" rx="1.6" fill="#333"/><rect x="1.3" y="4.9" width="9.4" height="6.6" fill="#fff"/><rect x="2.4" y="0.3" width="2.2" height="3.3" rx="1.1" fill="#fff" stroke="#333" stroke-width="0.9"/><rect x="7.4" y="0.3" width="2.2" height="3.3" rx="1.1" fill="#fff" stroke="#333" stroke-width="0.9"/><rect x="2.1" y="5.7" width="2" height="2" fill="#333"/><rect x="2.1" y="8.6" width="2" height="2" fill="#333"/><rect x="5.0" y="5.7" width="2" height="2" fill="#333"/><rect x="5.0" y="8.6" width="2" height="2" fill="#333"/><rect x="7.9" y="5.7" width="2" height="2" fill="#333"/><rect x="7.9" y="8.6" width="2" height="2" fill="#333"/></svg>
<div class="t" style="top:708.00px;font-size:16px;line-height:20px;color:#4d4d4d;letter-spacing:0.1px;left:938.00px;">Номер:</div>
<div class="r" style="left:998px;top:703px;width:152px;height:29px;border:1px solid #dcdcdc;border-radius:3px;background:#f9f9fa;box-sizing:border-box;"></div>
<div class="t" style="top:707.50px;font-size:16px;line-height:20px;color:#333;letter-spacing:0.36px;left:1002.00px;">0000-000002</div>
<div class="t" style="top:708.00px;font-size:16px;line-height:20px;color:#4d4d4d;letter-spacing:0.36px;left:1163.50px;">печатать как:</div>
<div class="r" style="left:1271px;top:703px;width:139px;height:29px;border:1px solid #9c9c9c;border-radius:3px;background:#fff;box-sizing:border-box;"></div>
<div class="t" style="top:707.50px;font-size:16px;line-height:20px;color:#b0b0b0;letter-spacing:0.36px;left:1275.00px;">2</div>
<div class="t" style="top:708.00px;font-size:16px;line-height:20px;color:#2b70aa;letter-spacing:0px;font-weight:700;left:1417.00px;">?</div>
<div class="t" style="top:742.00px;font-size:16px;line-height:20px;color:#4d4d4d;letter-spacing:0.36px;left:4.50px;">Сотрудник:</div>
<div class="r" style="left:96px;top:737px;width:596px;height:29px;border:1px solid #d0d0d0;border-radius:3px;background:#fff;box-sizing:border-box;"></div>
<div class="t" style="top:741.50px;font-size:16px;line-height:20px;color:#333;letter-spacing:0.36px;left:100.50px;">Работкина Жанна Дмитриевна</div>
<div class="r" style="left:639px;top:738px;width:1px;height:27px;background:#dcdcdc;"></div>
<svg class="r" style="left:646.5px;top:753.5px" width="12" height="4" viewBox="0 0 12 4"><rect x="1" y="1" width="2" height="2" fill="#333"/><rect x="5" y="1" width="2" height="2" fill="#333"/><rect x="9" y="1" width="2" height="2" fill="#333"/></svg>
<div class="r" style="left:665px;top:738px;width:1px;height:27px;background:#dcdcdc;"></div>
<svg class="r" style="left:671.0px;top:743.5px" width="14" height="14" viewBox="0 0 14 14"><path d="M4.3 5.5 H1.5 V12.5 H8.5 V9.8" fill="none" stroke="#4d4d4d" stroke-width="1.3"/><rect x="5.5" y="1.5" width="7" height="7" fill="none" stroke="#4d4d4d" stroke-width="1.3"/></svg>
<div class="r" style="left:4px;top:809px;width:1434px;height:491px;border:1px solid #b0b0b0;box-sizing:border-box;background:#fff;"></div>
<div class="r" style="left:4px;top:777px;width:187px;height:32px;border:1px solid #b4b4b4;border-bottom:none;border-radius:3px 3px 0 0;background:#ebebeb;box-sizing:border-box;"></div>
<div class="t" style="top:782.50px;font-size:16px;line-height:20px;color:#4d4d4d;letter-spacing:0.36px;left:17.50px;z-index:3;">Условия увольнения</div>
<div class="r" style="left:190px;top:777px;width:194px;height:32px;border:1px solid #b4b4b4;border-bottom:none;border-radius:3px 3px 0 0;background:#ebebeb;box-sizing:border-box;"></div>
<div class="t" style="top:782.50px;font-size:16px;line-height:20px;color:#4d4d4d;letter-spacing:0.36px;left:203.00px;z-index:3;">Компенсации отпуска</div>
<div class="r" style="left:603px;top:777px;width:146px;height:32px;border:1px solid #b4b4b4;border-bottom:none;border-radius:3px 3px 0 0;background:#ebebeb;box-sizing:border-box;"></div>
<div class="t" style="top:782.50px;font-size:16px;line-height:20px;color:#4d4d4d;letter-spacing:0.36px;left:616.00px;z-index:3;">Дополнительно</div>
<div class="r" style="left:748px;top:777px;width:218px;height:32px;border:1px solid #b4b4b4;border-bottom:none;border-radius:3px 3px 0 0;background:#ebebeb;box-sizing:border-box;"></div>
<div class="t" style="top:782.50px;font-size:16px;line-height:20px;color:#4d4d4d;letter-spacing:0.36px;left:761.00px;z-index:3;">Справки при увольнении</div>
<div class="r" style="left:383px;top:777px;width:221px;height:33px;border:1px solid #ababab;border-bottom:none;border-radius:3px 3px 0 0;background:#fff;box-sizing:border-box;z-index:2;"></div>
<div class="t" style="top:782.50px;font-size:16px;line-height:20px;color:#333;letter-spacing:0.36px;left:396.00px;z-index:3;">Начисления и удержания</div>
<div class="r" style="left:18px;top:850px;width:1406px;height:450px;border:1px solid #b0b0b0;box-sizing:border-box;background:#fff;"></div>
<div class="r" style="left:136px;top:818px;width:91px;height:32px;border:1px solid #b4b4b4;border-bottom:none;border-radius:3px 3px 0 0;background:#ebebeb;box-sizing:border-box;"></div>
<div class="t" style="top:823.50px;font-size:16px;line-height:20px;color:#4d4d4d;letter-spacing:0.36px;left:148.50px;z-index:3;">Пособия</div>
<div class="r" style="left:226px;top:818px;width:111px;height:32px;border:1px solid #b4b4b4;border-bottom:none;border-radius:3px 3px 0 0;background:#ebebeb;box-sizing:border-box;"></div>
<div class="t" style="top:823.50px;font-size:16px;line-height:20px;color:#4d4d4d;letter-spacing:0.36px;left:239.00px;z-index:3;">Удержания</div>
<div class="r" style="left:336px;top:818px;width:71px;height:32px;border:1px solid #b4b4b4;border-bottom:none;border-radius:3px 3px 0 0;background:#ebebeb;box-sizing:border-box;"></div>
<div class="t" style="top:823.50px;font-size:16px;line-height:20px;color:#4d4d4d;letter-spacing:0.36px;left:349.00px;z-index:3;">НДФЛ</div>
<div class="r" style="left:406px;top:818px;width:77px;height:32px;border:1px solid #b4b4b4;border-bottom:none;border-radius:3px 3px 0 0;background:#ebebeb;box-sizing:border-box;"></div>
<div class="t" style="top:823.50px;font-size:16px;line-height:20px;color:#4d4d4d;letter-spacing:0.36px;left:419.00px;z-index:3;">Займы</div>
<div class="r" style="left:482px;top:818px;width:84px;height:32px;border:1px solid #b4b4b4;border-bottom:none;border-radius:3px 3px 0 0;background:#ebebeb;box-sizing:border-box;"></div>
<div class="t" style="top:823.50px;font-size:16px;line-height:20px;color:#4d4d4d;letter-spacing:0.36px;left:495.00px;z-index:3;">Взносы</div>
<div class="r" style="left:565px;top:818px;width:213px;height:32px;border:1px solid #b4b4b4;border-bottom:none;border-radius:3px 3px 0 0;background:#ebebeb;box-sizing:border-box;"></div>
<div class="t" style="top:823.50px;font-size:16px;line-height:20px;color:#4d4d4d;letter-spacing:0.36px;left:578.00px;z-index:3;">Корректировки выплаты</div>
<div class="r" style="left:18px;top:818px;width:119px;height:33px;border:1px solid #ababab;border-bottom:none;border-radius:3px 3px 0 0;background:#fff;box-sizing:border-box;z-index:2;"></div>
<div class="t" style="top:823.50px;font-size:16px;line-height:20px;color:#333;letter-spacing:0.36px;left:31.00px;z-index:3;">Начисления</div>
<div class="r" style="left:32px;top:859px;width:108px;height:33px;border:1px solid #b3b3b3;border-bottom-color:#999;border-radius:3px;background:linear-gradient(#ffffff 0%,#fbfbfb 45%,#ececec 100%);box-sizing:border-box;box-shadow:0 1px 1px rgba(0,0,0,.12);"></div>
<div class="t" style="top:866.00px;font-size:16px;line-height:20px;color:#4d4d4d;letter-spacing:0.36px;left:-214.00px;width:600px;text-align:center;">Добавить</div>
<div class="r" style="left:165px;top:859px;width:76px;height:33px;border:1px solid #b3b3b3;border-bottom-color:#999;border-radius:3px;background:linear-gradient(#ffffff 0%,#fbfbfb 45%,#ececec 100%);box-sizing:border-box;box-shadow:0 1px 1px rgba(0,0,0,.12);"></div>
<div class="r" style="left:203px;top:860px;width:1px;height:31px;background:#c8c8c8;"></div>
<svg class="r" style="left:175px;top:865px" width="18" height="20" viewBox="0 0 18 20"><path d="M9 1.5 L16 9 H12 V18 H6 V9 H2 Z" fill="#42a6e6" stroke="#1d4f78" stroke-width="1.2" stroke-linejoin="round"/></svg>
<svg class="r" style="left:212px;top:865px" width="18" height="20" viewBox="0 0 18 20"><path d="M9 18.5 L16 11 H12 V2 H6 V11 H2 Z" fill="#42a6e6" stroke="#1d4f78" stroke-width="1.2" stroke-linejoin="round"/></svg>
<div class="r" style="left:266px;top:859px;width:214px;height:33px;border:1px solid #b3b3b3;border-bottom-color:#999;border-radius:3px;background:linear-gradient(#ffffff 0%,#fbfbfb 45%,#ececec 100%);box-sizing:border-box;box-shadow:0 1px 1px rgba(0,0,0,.12);"></div>
<div class="t" style="top:866.00px;font-size:16px;line-height:20px;color:#4d4d4d;letter-spacing:0.36px;left:73.00px;width:600px;text-align:center;">Отменить исправления</div>
<div class="r" style="left:491px;top:859px;width:38px;height:33px;border:1px solid #a8a8a8;border-top-color:#999;border-radius:3px;background:linear-gradient(#dcdcdc,#e9e9e9 30%,#ececec);box-sizing:border-box;"></div>
<svg class="r" style="left:500px;top:867px" width="20" height="18" viewBox="0 0 20 18"><rect x="0.5" y="0.5" width="18" height="15" fill="#dbe8f3" stroke="#5a7088"/><rect x="6.5" y="0.5" width="6" height="15" fill="#8cc27a" stroke="#5a7088"/><rect x="0.5" y="0.5" width="18" height="3.5" fill="#f6f8fa" stroke="#5a7088"/><path d="M11 13 H19 M15 9 V17" stroke="#2f8a1e" stroke-width="3"/></svg>
<div class="r" style="left:1335px;top:859px;width:75px;height:33px;border:1px solid #b3b3b3;border-bottom-color:#999;border-radius:3px;background:linear-gradient(#ffffff 0%,#fbfbfb 45%,#ececec 100%);box-sizing:border-box;box-shadow:0 1px 1px rgba(0,0,0,.12);"></div>
<div class="t" style="top:866.00px;font-size:16px;line-height:20px;color:#4d4d4d;letter-spacing:0.36px;left:1352.00px;">Еще</div>
<svg class="r" style="left:1393.5px;top:873px" width="8" height="5" viewBox="0 0 8 5"><path d="M0.5 0.5 H6.5 L3.5 4 Z" fill="#4d4d4d"/></svg>
<div class="r" style="left:32px;top:903px;width:1378px;height:397px;border:1px solid #b8b8b8;box-sizing:border-box;background:#fff;"></div>
<div class="r" style="left:33px;top:904px;width:1376px;height:35px;background:#f2f2f2;"></div>
<div class="r" style="left:33px;top:939px;width:1376px;height:1px;background:#cfcfcf;"></div>
<div class="r" style="left:84px;top:904px;width:1px;height:35px;background:#d9d9d9;"></div>
<div class="r" style="left:105px;top:904px;width:1px;height:35px;background:#d9d9d9;"></div>
<div class="r" style="left:267px;top:904px;width:1px;height:35px;background:#d9d9d9;"></div>
<div class="r" style="left:392px;top:904px;width:1px;height:35px;background:#d9d9d9;"></div>
<div class="r" style="left:608px;top:904px;width:1px;height:35px;background:#d9d9d9;"></div>
<div class="r" style="left:771px;top:904px;width:1px;height:35px;background:#d9d9d9;"></div>
<div class="r" style="left:1137px;top:904px;width:1px;height:35px;background:#d9d9d9;"></div>
<div class="r" style="left:1282px;top:904px;width:1px;height:35px;background:#d9d9d9;"></div>
<div class="t" style="top:910.50px;font-size:16px;line-height:20px;color:#4d4d4d;letter-spacing:0.36px;left:43.50px;">N</div>
<div class="t" style="top:910.50px;font-size:16px;line-height:20px;color:#4d4d4d;letter-spacing:0.36px;left:116.00px;">Начисление</div>
<div class="t" style="top:910.50px;font-size:16px;line-height:20px;color:#4d4d4d;letter-spacing:0.36px;left:278.00px;">Результат</div>
<div class="t" style="top:910.50px;font-size:16px;line-height:20px;color:#4d4d4d;letter-spacing:0.36px;left:403.00px;">Отработано (оплачено)</div>
<div class="t" style="top:910.50px;font-size:16px;line-height:20px;color:#4d4d4d;letter-spacing:0.36px;left:619.00px;">Норма времени</div>
<div class="t" style="top:910.50px;font-size:16px;line-height:20px;color:#4d4d4d;letter-spacing:0.36px;left:782.00px;">Показатели</div>
<div class="t" style="top:910.50px;font-size:16px;line-height:20px;color:#4d4d4d;letter-spacing:0.36px;left:1148.00px;">Период</div>
<div class="r" style="left:33px;top:940px;width:1376px;height:174px;background:#fcefc5;"></div>
<div class="r" style="left:33px;top:940px;width:1376px;height:1px;background:#fdf7e2;"></div>
<div class="r" style="left:84px;top:940px;width:1px;height:174px;background:#fdf7e2;"></div>
<div class="r" style="left:105px;top:940px;width:1px;height:174px;background:#fdf7e2;"></div>
<div class="r" style="left:267px;top:940px;width:1px;height:174px;background:#fdf7e2;"></div>
<div class="r" style="left:392px;top:940px;width:1px;height:174px;background:#fdf7e2;"></div>
<div class="r" style="left:608px;top:940px;width:1px;height:174px;background:#fdf7e2;"></div>
<div class="r" style="left:771px;top:940px;width:1px;height:174px;background:#fdf7e2;"></div>
<div class="r" style="left:1137px;top:940px;width:1px;height:174px;background:#fdf7e2;"></div>
<div class="r" style="left:514px;top:940px;width:1px;height:174px;background:#fdf7e2;"></div>
<div class="r" style="left:700px;top:940px;width:1px;height:174px;background:#fdf7e2;"></div>
<div class="r" style="left:984px;top:940px;width:1px;height:174px;background:#fdf7e2;"></div>
<div class="r" style="left:1282px;top:940px;width:1px;height:174px;background:#fdf7e2;"></div>
<div class="r" style="left:608px;top:974px;width:529px;height:1px;background:#fdf7e2;"></div>
<div class="r" style="left:608px;top:1009px;width:529px;height:1px;background:#fdf7e2;"></div>
<div class="r" style="left:608px;top:1044px;width:529px;height:1px;background:#fdf7e2;"></div>
<div class="r" style="left:608px;top:1079px;width:529px;height:1px;background:#fdf7e2;"></div>
<div class="r" style="left:1137px;top:974px;width:272px;height:1px;background:#fdf7e2;"></div>
<div class="r" style="left:33px;top:941px;width:51px;height:172px;background:#fce493;border:3px solid #f3c42a;box-sizing:border-box;"></div>
<div class="r" style="left:33px;top:1113px;width:1376px;height:2px;background:#f0ece0;"></div>
<div class="t" style="top:946.50px;font-size:16px;line-height:20px;color:#333;letter-spacing:0.36px;right:1372.64px;">1</div>
<div class="t" style="top:946.50px;font-size:16px;line-height:20px;color:#333;letter-spacing:0.36px;left:116.00px;">Отпуск основной</div>
<div class="t" style="top:946.50px;font-size:16px;line-height:20px;color:#333;letter-spacing:0.36px;right:1063.14px;">-2 244,00</div>
<div class="t" style="top:946.50px;font-size:16px;line-height:20px;color:#333;letter-spacing:0.2px;font-weight:700;right:941.30px;">-3,00</div>
<div class="t" style="top:946.50px;font-size:16px;line-height:20px;color:#333;letter-spacing:0.36px;left:525.00px;">дн.</div>
<div class="t" style="top:947.50px;font-size:16px;line-height:20px;color:#333;letter-spacing:0.36px;font-style:italic;left:782.50px;">МРОТ</div>
<div class="t" style="top:947.50px;font-size:16px;line-height:20px;color:#333;letter-spacing:0.2px;font-weight:700;right:318.30px;">22 440</div>
<div class="t" style="top:982.50px;font-size:16px;line-height:20px;color:#333;letter-spacing:0.36px;font-style:italic;left:782.50px;">Дней отпуска</div>
<div class="t" style="top:982.50px;font-size:16px;line-height:20px;color:#333;letter-spacing:0.2px;font-weight:700;right:318.30px;">-3</div>
<div class="t" style="top:1017.50px;font-size:16px;line-height:20px;color:#333;letter-spacing:0.36px;font-style:italic;left:782.50px;">Коэф. индекс. средн.</div>
<div class="t" style="top:1017.50px;font-size:16px;line-height:20px;color:#333;letter-spacing:0.2px;font-weight:700;right:318.30px;">1</div>
<div class="t" style="top:1052.50px;font-size:16px;line-height:20px;color:#333;letter-spacing:0.36px;font-style:italic;left:782.50px;">Ср. заработок инд.</div>
<div class="t" style="top:1087.50px;font-size:16px;line-height:20px;color:#333;letter-spacing:0.36px;font-style:italic;left:782.50px;">Ср. заработок неинд.</div>
<div class="t" style="top:946.50px;font-size:16px;line-height:20px;color:#333;letter-spacing:0.36px;left:1148.00px;">07.04.2025</div>
<div class="t" style="top:946.50px;font-size:16px;line-height:20px;color:#333;letter-spacing:0.36px;left:1293.00px;">09.04.2025</div>
<div class="t" style="top:1122.00px;font-size:16px;line-height:20px;color:#333;letter-spacing:0.36px;right:1372.64px;">2</div>
<div class="t" style="top:1122.00px;font-size:16px;line-height:20px;color:#333;letter-spacing:0.36px;left:116.00px;">Оплата по окладу</div>
<div class="t" style="top:1122.00px;font-size:16px;line-height:20px;color:#333;letter-spacing:0.36px;right:1063.14px;">19 090,91</div>
<div class="t" style="top:1122.00px;font-size:16px;line-height:20px;color:#333;letter-spacing:0.36px;right:941.14px;">14,00</div>
<div class="t" style="top:1122.00px;font-size:16px;line-height:20px;color:#333;letter-spacing:0.36px;left:525.00px;">дн.</div>
<div class="t" style="top:1122.00px;font-size:16px;line-height:20px;color:#333;letter-spacing:0.36px;right:754.64px;">22,00</div>
<div class="t" style="top:1122.00px;font-size:16px;line-height:20px;color:#333;letter-spacing:0.36px;left:711.00px;">дн.</div>
<div class="t" style="top:1156.00px;font-size:16px;line-height:20px;color:#333;letter-spacing:0.36px;right:941.14px;">112,00</div>
<div class="t" style="top:1156.00px;font-size:16px;line-height:20px;color:#333;letter-spacing:0.36px;left:525.00px;">чс.</div>
<div class="t" style="top:1156.00px;font-size:16px;line-height:20px;color:#333;letter-spacing:0.36px;right:754.64px;">176,00</div>
<div class="t" style="top:1156.00px;font-size:16px;line-height:20px;color:#333;letter-spacing:0.36px;left:711.00px;">чс.</div>
<div class="t" style="top:1122.00px;font-size:16px;line-height:20px;color:#333;letter-spacing:0.36px;font-style:italic;left:782.50px;">Оклад</div>
<div class="t" style="top:1122.00px;font-size:16px;line-height:20px;color:#333;letter-spacing:0.36px;right:318.14px;">30 000</div>
<div class="t" style="top:1157.00px;font-size:16px;line-height:20px;color:#333;letter-spacing:0.36px;font-style:italic;left:782.50px;">Доля неполн. времени</div>
<div class="t" style="top:1157.00px;font-size:16px;line-height:20px;color:#333;letter-spacing:0.36px;right:318.14px;">1</div>
<div class="t" style="top:1122.00px;font-size:16px;line-height:20px;color:#333;letter-spacing:0.36px;left:1148.00px;">01.09.2025</div>
<div class="t" style="top:1122.00px;font-size:16px;line-height:20px;color:#333;letter-spacing:0.36px;left:1293.00px;">18.09.2025</div>
<svg class="r" style="left:330px;top:955px" width="430" height="170" viewBox="0 0 430 170"><path d="M15 12 L64 41 H88 A58 58 0 0 1 88 0 Z" fill="none"/><path d="M64 41.4 L15 12 L44.6 54.8 A58.75 58.75 0 0 0 87 154.2 H355 A58.75 58.75 0 0 0 355 36.7 H87 A58.75 58.75 0 0 0 64 41.4 Z" fill="#fff" stroke="#e5403f" stroke-width="3.2" stroke-linejoin="round"/></svg>
<div class="t" style="top:1012.00px;font-size:21px;line-height:26px;color:#e5403f;letter-spacing:0.3px;font-weight:700;left:249.00px;width:600px;text-align:center;">Сторно отпуска</div>
<div class="t" style="top:1038.50px;font-size:21px;line-height:26px;color:#e5403f;letter-spacing:0.3px;font-weight:700;left:249.00px;width:600px;text-align:center;">рассчитывается из</div>
<div class="t" style="top:1064.00px;font-size:21px;line-height:26px;color:#e5403f;letter-spacing:0.3px;font-weight:700;left:249.00px;width:600px;text-align:center;">МРОТ</div>
<div class="r" style="left:0px;top:1274px;width:1445px;height:1px;background:#a3a3a3;"></div>
</body></html>
